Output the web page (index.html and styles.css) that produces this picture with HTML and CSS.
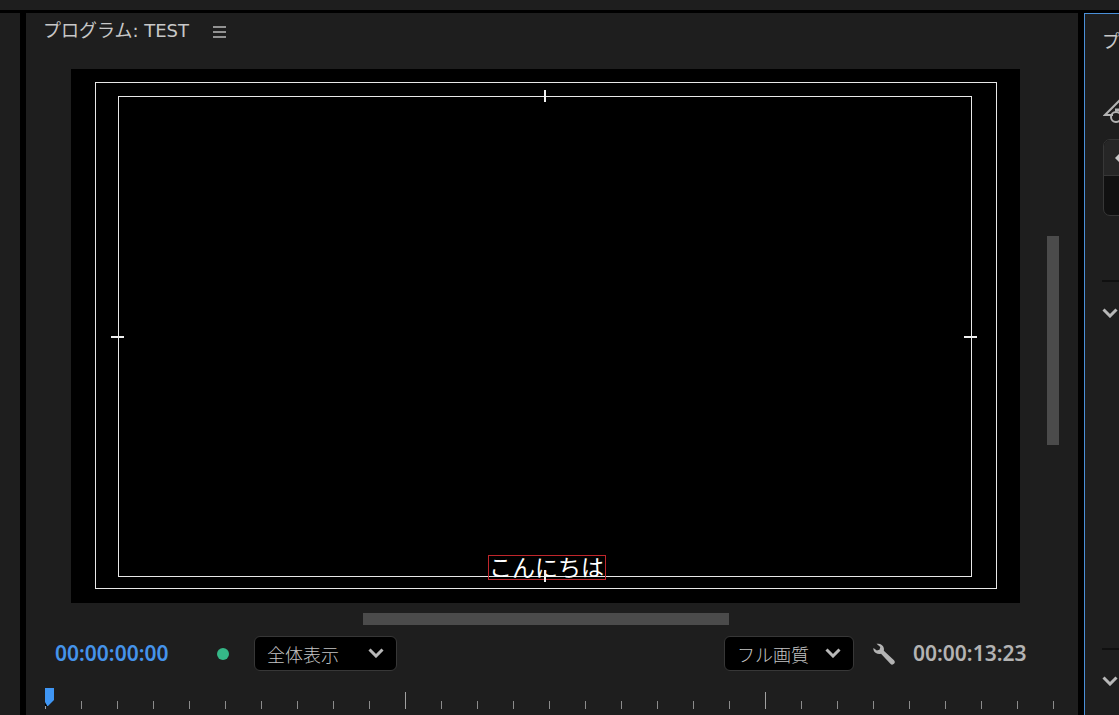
FILE: index.html
```html
<!DOCTYPE html>
<html lang="ja">
<head>
<meta charset="utf-8">
<title>プログラム: TEST</title>
<link rel="stylesheet" href="styles.css">
</head>
<body>
<div class="app">
  <header class="topbar"></header>
  <div class="workspace">
    <aside class="side-left"></aside>
    <main class="program">
      <div class="panel-head">
        <h1 class="panel-title">プログラム: TEST</h1>
        <button class="icon-button" aria-label="パネルメニュー"><svg width="13" height="13" viewBox="0 0 13 13"><path d="M0 2h13M0 7h13M0 12h13" stroke="#929292" stroke-width="2"/></svg></button>
      </div>
      <div class="stage">
        <div class="monitor">
          <div class="action-safe">
            <div class="title-safe">
              <p class="caption">こんにちは</p>
              <i class="mark mark-top"></i><i class="mark mark-bottom"></i>
              <i class="mark mark-left"></i><i class="mark mark-right"></i>
            </div>
          </div>
        </div>
        <div class="scroll-v"><div class="thumb-v"></div></div>
      </div>
      <div class="scroll-h"><div class="thumb-h"></div></div>
      <div class="controls">
        <span class="timecode current">00:00:00:00</span>
        <span class="status"></span>
        <div class="picker zoom-picker">
          <select aria-label="ズームレベル"><option>全体表示</option></select>
          <svg class="chevron" width="16" height="10" viewBox="0 0 16 10"><path d="M1.500 1.500L8 8l6.500-6.500"/></svg>
        </div>
        <div class="picker quality-picker">
          <select aria-label="再生時の解像度"><option>フル画質</option></select>
          <svg class="chevron" width="16" height="10" viewBox="0 0 16 10"><path d="M1.500 1.500L8 8l6.500-6.500"/></svg>
        </div>
        <button class="icon-button" aria-label="設定"><svg width="22" height="22" viewBox="0 0 22 22"><path fill="#b3b3b3" d="M3.500.8C7 .1 10.200 1.800 10.800 5c.2 1 .2 1.900 0 2.800L21 17.200c1.200 1.200 1 2.600 0 3.600s-2.500 1.200-3.600 0L8 10.800C5 11.600 1.700 10.200.6 7.200.3 6.400.3 5.700.5 5l3.300 2.500 2.700-.7.8-2.800z"/></svg></button>
        <span class="timecode duration">00:00:13:23</span>
      </div>
      <div class="ruler"><svg class="playhead" width="9" height="18" viewBox="0 0 9 18"><path d="M0 0h9v12l-6 6H2l-2-4z" fill="#3f96f4"/><path d="M0 14l2 4H0z" fill="#000"/></svg></div>
    </main>
    <aside class="properties">
      <h2 class="properties-title">プ</h2>
      <svg class="tool-icon" width="24" height="26" viewBox="0 0 24 26" fill="none" stroke="#b3b3b3" stroke-width="2"><path d="M18 1L2 17h8"/><circle cx="13" cy="19" r="5"/><path d="M12 12h8" stroke-width="3"/></svg>
      <div class="card"><div class="card-head"><svg width="14" height="14" viewBox="0 0 14 14"><path d="M0 7l7-7 7 7-7 7z" fill="#c8c8c8"/></svg></div><div class="card-body"></div></div>
      <section class="section section-first"><button class="icon-button" aria-label="セクションを開閉"><svg class="chevron" width="16" height="10" viewBox="0 0 16 10"><path d="M1.500 1.500L8 8l6.500-6.500"/></svg></button></section>
      <section class="section section-last"><button class="icon-button" aria-label="セクションを開閉"><svg class="chevron" width="16" height="10" viewBox="0 0 16 10"><path d="M1.500 1.500L8 8l6.500-6.500"/></svg></button></section>
    </aside>
  </div>
</div>
</body>
</html>
```
FILE: styles.css
```css
* { box-sizing: border-box; }
body {
  margin: 0;
  background: #000;
  color: #c8c8c8;
  font-family: "DejaVu Sans", "Noto Sans CJK JP", sans-serif;
}
.app {
  display: flex;
  flex-direction: column;
  gap: 3px;
  height: 100vh;
  overflow: hidden;
}
.topbar { height: 10px; flex: none; background: #1e1e1e; }
.workspace {
  flex: 1;
  min-height: 0;
  display: grid;
  grid-template-columns: 20px 1fr 35px;
  gap: 6px;
}
.side-left, .program, .properties { background: #1e1e1e; }
.program { display: flex; flex-direction: column; min-width: 0; }

.panel-head {
  display: flex;
  align-items: center;
  gap: 24px;
  height: 36px;
  margin-bottom: 20px;
  padding-left: 17px;
}
.panel-title, .properties-title {
  margin: 0;
  font-size: 18px;
  font-weight: 400;
  line-height: 36px;
  white-space: nowrap;
}
.icon-button {
  display: flex;
  padding: 0;
  border: 0;
  background: none;
}

.stage { flex: 1; display: flex; min-height: 0; padding-left: 45px; }
.monitor { flex: 1; display: flex; padding: 13px 23px 14px 24px; background: #000; }
.action-safe, .title-safe { flex: 1; border: 1px solid #e8e8e8; }
.action-safe { display: flex; padding: 13px 24px 11px 22px; }
.title-safe { position: relative; }
.caption {
  position: absolute;
  left: 50%;
  bottom: -4px;
  margin: 0 0 0 -57px;
  width: 118px;
  height: 25px;
  border: 1px solid #c0262c;
  color: #fff;
  font-family: "Noto Sans CJK JP", sans-serif;
  font-size: 23px;
  line-height: 20px;
  white-space: nowrap;
}
.mark { position: absolute; background: #f0f0f0; }
.mark-top, .mark-bottom { left: 50%; width: 2px; height: 12px; margin-left: -1px; }
.mark-left, .mark-right { top: 50%; width: 13px; height: 2px; margin-top: -1px; }
.mark-top { top: -7px; }
.mark-bottom { bottom: -6px; }
.mark-left { left: -8px; }
.mark-right { right: -6px; }

.scroll-v { width: 58px; padding: 167px 0 158px 27px; }
.thumb-v { width: 12px; height: 100%; background: #4b4b4b; }
.scroll-h { padding: 10px 349px 11px 337px; }
.thumb-h { height: 12px; background: #4b4b4b; }

.controls {
  display: flex;
  align-items: center;
  height: 35px;
  padding: 0 49px 0 29px;
}
.timecode {
  font-family: "Noto Sans", sans-serif;
  font-size: 21px;
  font-weight: 600;
  line-height: 35px;
}
.current { width: 162px; color: #4593ea; }
.duration { width: 116px; margin-left: 18px; color: #b3b3b3; }
.status {
  width: 12px;
  height: 12px;
  margin-right: 25px;
  border-radius: 50%;
  background: #35b787;
}
.picker { position: relative; }
.zoom-picker { width: 143px; margin-right: auto; }
.quality-picker { width: 130px; margin-right: 19px; }
.picker select {
  display: block;
  width: 100%;
  height: 35px;
  padding: 0 30px 0 12px;
  border: 1px solid #373737;
  border-radius: 6px;
  appearance: none;
  background: #000;
  color: #c4c4c4;
  font-family: "Noto Sans CJK JP", sans-serif;
  font-size: 18px;
  font-weight: 300;
}
.chevron { fill: none; stroke: #b8b8b8; stroke-width: 3; }
.picker .chevron { position: absolute; right: 13px; top: 12px; pointer-events: none; }

.ruler {
  position: relative;
  height: 27px;
  margin: 17px 23px 0 19px;
  background:
    repeating-linear-gradient(90deg, #a0a0a0 0 1px, transparent 1px 360px) 0 4px / 100% 17px no-repeat,
    repeating-linear-gradient(90deg, #8c8c8c 0 1px, transparent 1px 36px) 0 13px / 100% 8px no-repeat;
}
.playhead { position: absolute; left: 0; top: 0; }

.properties {
  min-width: 0;
  padding: 10px 0 0 17px;
  border: solid #4a8fd8;
  border-width: 1px 0 0 1px;
  overflow: hidden;
}
.properties-title { width: 18px; }
.tool-icon { display: block; margin: 38px 0 0 1px; }
.card {
  width: 60px;
  height: 77px;
  margin: 15px 0 0 1px;
  border: 1px solid #373737;
  border-radius: 7px;
  background: #111;
  overflow: hidden;
}
.card-head {
  display: flex;
  align-items: center;
  height: 36px;
  padding-left: 11px;
  border-bottom: 1px solid #373737;
  background: #262626;
}
.section { border-top: 2px solid #101010; padding-top: 26px; }
.section-first { height: 368px; margin-top: 64px; }
```
